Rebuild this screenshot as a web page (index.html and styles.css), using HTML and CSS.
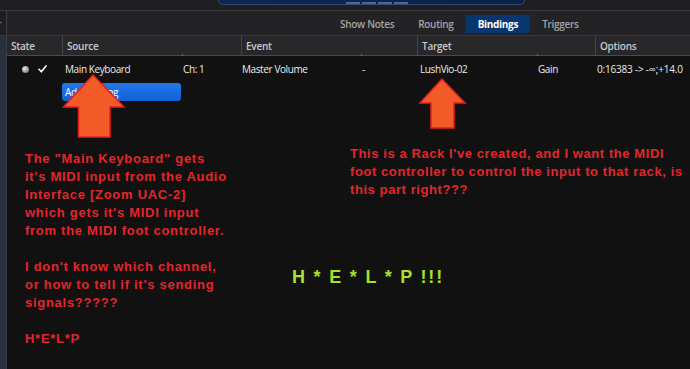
FILE: index.html
```html
<!DOCTYPE html>
<html>
<head>
<meta charset="utf-8">
<link rel="stylesheet" href="styles.css">
</head>
<body>
<div class="app">
  <div class="topstrip">
    <div class="display"><span class="seg"></span><span class="seg"></span><span class="seg"></span><span class="seg"></span></div>
  </div>
  <div class="main">
    <aside class="side">
      <div class="side-top">r</div>
      <div class="side-rest"></div>
    </aside>
    <section class="content">
      <nav class="tabs">
        <span class="tab">Show Notes</span>
        <span class="tab">Routing</span>
        <span class="tab active">Bindings</span>
        <span class="tab">Triggers</span>
      </nav>
      <div class="grid header">
        <div class="hcell">State</div>
        <div class="hcell span2">Source<i class="tick"></i></div>
        <div class="hcell span2">Event<i class="tick"></i></div>
        <div class="hcell span2">Target<i class="tick"></i></div>
        <div class="hcell">Options</div>
      </div>
      <div class="body">
        <div class="grid row">
          <div class="cell state"><span class="bullet"></span><svg class="check" width="9" height="8" viewBox="0 0 9 8"><path d="M1 4.3 L3.4 6.8 L8 1" /></svg></div>
          <div class="cell src">Main Keyboard</div>
          <div class="cell ch">Ch: 1</div>
          <div class="cell ev">Master Volume</div>
          <div class="cell dash">-</div>
          <div class="cell tgt">LushVio-02</div>
          <div class="cell gain">Gain</div>
          <div class="cell opt">0:16383 -&gt; -∞;+14.0</div>
        </div>
        <div class="grid row2">
          <div></div>
          <button class="add">Add Binding</button>
        </div>
        <div class="notes">
          <div class="note left">
            <p>The "Main Keyboard" gets<br>it's MIDI input from the Audio<br>Interface [Zoom UAC-2]<br>which gets it's MIDI input<br>from the MIDI foot controller.</p>
            <p>I don't know which channel,<br>or how to tell if it's sending<br>signals?????</p>
            <p>H*E*L*P</p>
          </div>
          <div class="note-right">
            <p class="note right">This is a Rack I've created, and I want the MIDI<br>foot controller to control the input to that rack, is<br>this part right???</p>
            <p class="help">H * E * L * P !!!</p>
          </div>
        </div>
      </div>
    </section>
  </div>
  <svg class="arrows" width="690" height="369" viewBox="0 0 690 369">
    <polygon points="93,75 63.5,107 78.5,107 78.5,137 110,137 110,107 124,107" />
    <polygon points="442,79 420,103 431,103 431,128 454,128 454,103 465,103" />
  </svg>
</div>
</body>
</html>
```

FILE: styles.css
```css
* { box-sizing: border-box; }
html, body { margin: 0; padding: 0; }
body {
  width: 690px;
  height: 369px;
  overflow: hidden;
  background: #111112;
  font-family: "Open Sans", "Noto Sans", sans-serif;
}
.app {
  position: relative;
  width: 690px;
  height: 369px;
  display: flex;
  flex-direction: column;
}
.topstrip {
  height: 11px;
  background: #1f1f21;
  border-bottom: 1px solid #3a3a3c;
  display: flex;
}
.display {
  margin-left: 218px;
  width: 307px;
  height: 5px;
  background: linear-gradient(90deg, #0d2850, #0a2246);
  border: 1px solid #2d4a75;
  border-top: none;
  border-radius: 0 0 6px 6px;
  display: flex;
  gap: 2px;
  padding-left: 127px;
  align-items: flex-end;
}
.seg {
  width: 14px;
  height: 2px;
  background: #4d6a92;
}
.main {
  flex: 1;
  display: flex;
  min-height: 0;
}
.side {
  width: 7px;
  display: flex;
  flex-direction: column;
  border-right: 1px solid #3b3d42;
}
.side-top {
  height: 25px;
  background: #1f1f21;
  color: #9a9a9a;
  font-size: 11px;
  line-height: 25px;
  text-indent: -3px;
  overflow: hidden;
  border-bottom: 1px solid #3a3a3c;
}
.side-rest {
  flex: 1;
  background: #26313d;
}
.content {
  flex: 1;
  display: flex;
  flex-direction: column;
  min-width: 0;
}
.tabs {
  height: 25px;
  background: #232326;
  border-bottom: 1px solid #3a3a3c;
  display: flex;
  align-items: center;
  padding-left: 321px;
  padding-top: 2px;
}
.tab {
  height: 18px;
  line-height: 18px;
  padding: 0 12px;
  font-size: 10px;
  font-weight: 600;
  letter-spacing: -0.3px;
  color: #a3a3a6;
}
.tab.active {
  background: #0a3670;
  color: #ffffff;
  font-weight: 700;
}
.grid {
  display: grid;
  grid-template-columns: 55px 119px 60px 117px 59px 119px 59px 1fr;
}
.header {
  height: 20px;
  background: #28282b;
  border-bottom: 1px solid #4a4a4d;
}
.hcell {
  position: relative;
  font-size: 10px;
  font-weight: 600;
  letter-spacing: -0.25px;
  color: #c9c9cc;
  line-height: 19px;
  padding: 1px 0 0 4px;
  border-left: 1px solid #46464a;
}
.hcell:first-child { border-left: none; }
.span2 { grid-column: span 2; }
.tick {
  position: absolute;
  left: 119px;
  bottom: 0;
  width: 1px;
  height: 2px;
  background: #6a6a6e;
}
.body {
  flex: 1;
  background: #111112;
}
.row {
  height: 26px;
  align-items: center;
  font-size: 10px;
  letter-spacing: -0.4px;
  color: #ececec;
}
.cell { white-space: nowrap; }
.state {
  display: flex;
  align-items: center;
  padding-left: 15px;
}
.bullet {
  width: 7px;
  height: 7px;
  border-radius: 50%;
  background: radial-gradient(circle at 35% 35%, #e6e6e6, #8a8a8a 70%, #5a5a5a);
}
.check {
  margin-left: 9px;
  margin-bottom: 1px;
}
.check path {
  fill: none;
  stroke: #ffffff;
  stroke-width: 1.6;
  stroke-linecap: round;
  stroke-linejoin: round;
}
.src { padding-left: 3px; }
.ch { padding-left: 2px; }
.ev { padding-left: 1px; }
.dash { padding-left: 4px; }
.tgt { padding-left: 3px; }
.gain { padding-left: 2px; }
.opt { padding-left: 2px; letter-spacing: -0.2px; }
.row2 { height: 19px; padding-top: 1px; }
.add {
  height: 18px;
  margin: 0;
  padding: 0 3px;
  border: none;
  border-radius: 3px;
  background: linear-gradient(#2079ea, #1261d6);
  color: #ffffff;
  font-family: "Open Sans", "Noto Sans", sans-serif;
  font-size: 10px;
  letter-spacing: -0.3px;
  text-align: left;
}
.notes {
  margin-top: 44px;
  display: grid;
  grid-template-columns: 267px 1fr;
  padding-left: 18px;
}
.note p { margin: 0; }
.note {
  margin: 0;
  font-family: "Liberation Sans", Arial, sans-serif;
  font-weight: 700;
  font-size: 13px;
  line-height: 18px;
  letter-spacing: 0.72px;
  color: #e3262b;
  white-space: nowrap;
}
.left { padding-top: 5px; }
.left p + p { margin-top: 18px; }
.note-right { display: flex; flex-direction: column; }
.note-right .right { margin-left: 58px; letter-spacing: 0.58px; }
.help {
  margin: 67px 0 0 0;
  font-family: "Liberation Sans", Arial, sans-serif;
  font-weight: 700;
  font-size: 18px;
  line-height: 22px;
  letter-spacing: 1.8px;
  color: #a8e02a;
  white-space: pre;
}
.arrows {
  position: absolute;
  left: 0;
  top: 0;
  pointer-events: none;
}
.arrows polygon {
  fill: #f25a28;
  stroke: #e4201f;
  stroke-width: 1.5;
  stroke-linejoin: miter;
}
```
